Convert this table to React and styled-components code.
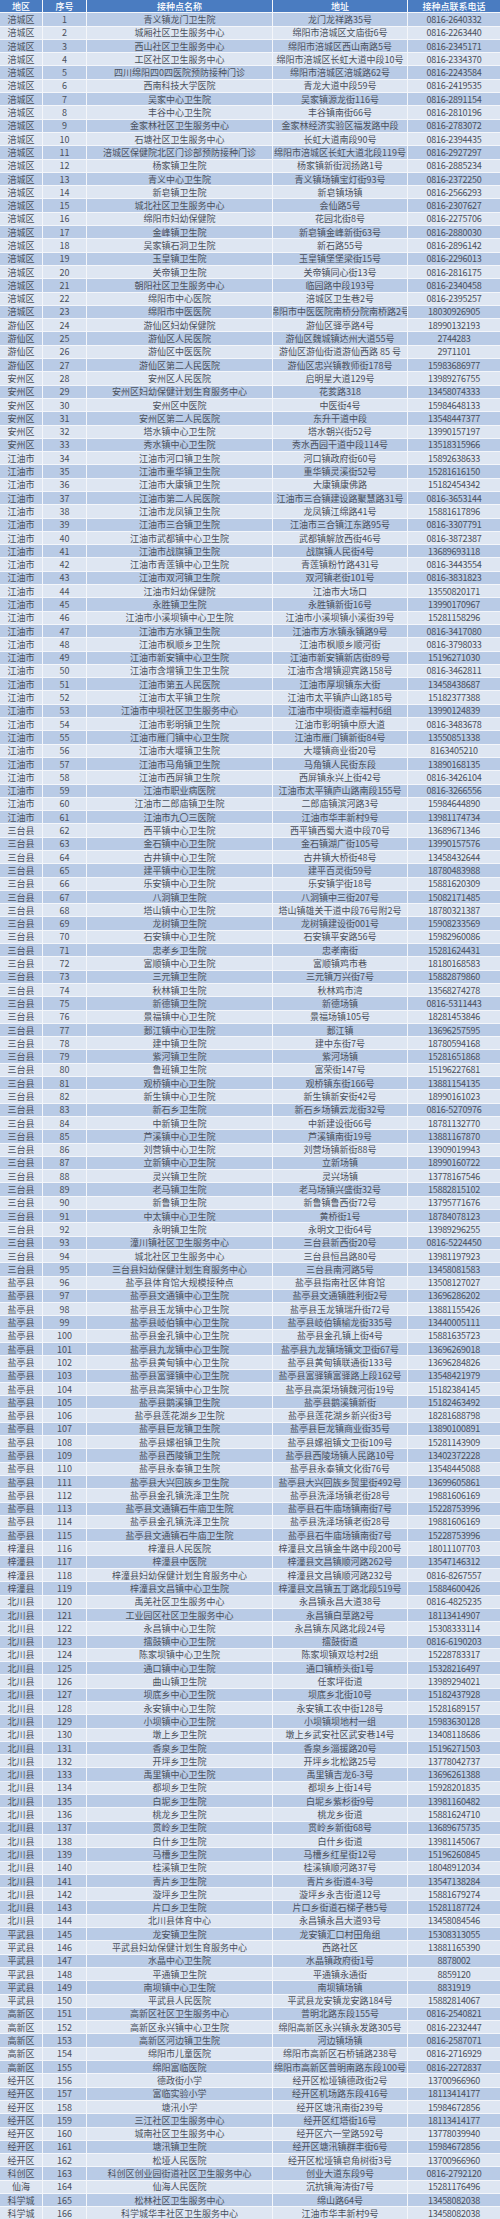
import React from 'react';
import styled, { createGlobalStyle } from 'styled-components';

const GlobalStyle = createGlobalStyle`
  html, body {
    margin: 0;
    padding: 0;
    background: #ffffff;
  }
  body {
    font-family: "Noto Sans CJK SC", "Noto Sans", sans-serif;
  }
`;

const HEAD = ['地区', '序号', '接种点名称', '地址', '接种点联系电话'];

// 地区|接种点名称|地址|电话
const rows = `涪城区|青义镇龙门卫生院|龙门龙祥路35号|0816-2640332
涪城区|城厢社区卫生服务中心|绵阳市涪城区文庙街6号|0816-2263440
涪城区|西山社区卫生服务中心|绵阳市涪城区西山南路5号|0816-2345171
涪城区|工区社区卫生服务中心|绵阳市涪城区长虹大道中段10号|0816-2334370
涪城区|四川绵阳四0四医院预防接种门诊|绵阳市涪城区涪城路62号|0816-2243584
涪城区|西南科技大学医院|青龙大道中段59号|0816-2419535
涪城区|吴家中心卫生院|吴家镇源龙街116号|0816-2891154
涪城区|丰谷中心卫生院|丰谷镇南街66号|0816-2810196
涪城区|金家林社区卫生服务中心|金家林经济实验区福发路中段|0816-2783072
涪城区|石塘社区卫生服务中心|长虹大道南段90号|0816-2394435
涪城区|涪城区保健院北区门诊部预防接种门诊|绵阳市涪城区长虹大道北段119号|0816-2927297
涪城区|杨家镇卫生院|杨家镇新街润扬路1号|0816-2885234
涪城区|青义中心卫生院|青义镇场镇宝灯街93号|0816-2372250
涪城区|新皂镇卫生院|新皂镇场镇|0816-2566293
涪城区|城北社区卫生服务中心|会仙路5号|0816-2307627
涪城区|绵阳市妇幼保健院|花园北街8号|0816-2275706
涪城区|金峰镇卫生院|新皂镇金峰新街63号|0816-2880030
涪城区|吴家镇石洞卫生院|新石路55号|0816-2896142
涪城区|玉皇镇卫生院|玉皇镇堡堡梁街15号|0816-2296013
涪城区|关帝镇卫生院|关帝镇同心街13号|0816-2816175
涪城区|朝阳社区卫生服务中心|临园路中段193号|0816-2340458
涪城区|绵阳市中心医院|涪城区卫生巷2号|0816-2395257
涪城区|绵阳市中医医院|绵阳市中医医院南桥分院南桥路2号|18030926905
游仙区|游仙区妇幼保健院|游仙区驿亭路4号|18990132193
游仙区|游仙区人民医院|游仙区魏城镇达州大道55号|2744283
游仙区|游仙区中医医院|游仙区游仙街道游仙西路 85 号|2971101
游仙区|游仙区第二人民医院|游仙区忠兴镇教师街178号|15983686977
安州区|安州区人民医院|启明星大道129号|13989276755
安州区|安州区妇幼保健计划生育服务中心|花荄路318|13458074333
安州区|安州区中医院|中医街4号|15984648133
安州区|安州区第二人民医院|东升干道中段|13548447377
安州区|塔水镇中心卫生院|塔水朝兴街52号|13990157197
安州区|秀水镇中心卫生院|秀水西园干道中段114号|13518315966
江油市|江油市河口镇卫生院|河口镇政府街60号|15892638633
江油市|江油市重华镇卫生院|重华镇灵溪街52号|15281616150
江油市|江油市大康镇卫生院|大康镇康佛路|15182454342
江油市|江油市第二人民医院|江油市三合镇建设路聚慧路31号|0816-3653144
江油市|江油市龙凤镇卫生院|龙凤镇江绵路41号|15881617896
江油市|江油市三合镇卫生院|江油市三合镇江东路95号|0816-3307791
江油市|江油市武都镇中心卫生院|武都镇解放西街46号|0816-3872387
江油市|江油市战旗镇卫生院|战旗镇人民街4号|13689693118
江油市|江油市青莲镇中心卫生院|青莲镇粉竹路431号|0816-3443554
江油市|江油市双河镇卫生院|双河镇老街101号|0816-3831823
江油市|江油市妇幼保健院|江油市大场口|13550820171
江油市|永胜镇卫生院|永胜镇新街16号|13990170967
江油市|江油市小溪坝镇中心卫生院|江油市小溪坝镇小溪街39号|15281158296
江油市|江油市方水镇卫生院|江油市方水镇永镇路9号|0816-3417080
江油市|江油市枫顺乡卫生院|江油市枫顺乡顺河街|0816-3798033
江油市|江油市新安镇中心卫生院|江油市新安镇新店街89号|15196271030
江油市|江油市含增镇卫生卫生院|江油市含增镇迎宾路158号|0816-3462811
江油市|江油市第五人民医院|江油市厚坝镇东大街|13458438687
江油市|江油市太平镇卫生院|江油市太平镇庐山路185号|15182377388
江油市|江油市中坝社区卫生服务中心|江油市中坝街道幸福村6组|13990124839
江油市|江油市彰明镇卫生院|江油市彰明镇中原大道|0816-3483678
江油市|江油市雁门镇中心卫生院|江油市雁门镇新街84号|13550851338
江油市|江油市大堰镇卫生院|大堰镇商业街20号|8163405210
江油市|江油市马角镇卫生院|马角镇人民街东段|13890168135
江油市|江油市西屏镇卫生院|西屏镇永兴上街42号|0816-3426104
江油市|江油市职业病医院|江油市太平镇庐山路南段155号|0816-3266556
江油市|江油市二郎庙镇卫生院|二郎庙镇滨河路3号|15984644890
江油市|江油市九〇三医院|江油市华丰新村9号|13981174734
三台县|西平镇中心卫生院|西平镇西蜀大道中段70号|13689671346
三台县|金石镇中心卫生院|金石镇湖广街105号|13990157576
三台县|古井镇中心卫生院|古井镇大桥街48号|13458432644
三台县|建平镇中心卫生院|建平百灵街59号|18780483988
三台县|乐安镇中心卫生院|乐安镇学街18号|15881620309
三台县|八洞镇卫生院|八洞镇中三街207号|15082171485
三台县|塔山镇中心卫生院|塔山镇雄关干道中段76号附2号|18780321387
三台县|龙树镇卫生院|龙树镇建设街001号|15908233569
三台县|石安镇中心卫生院|石安镇平安路56号|15982960086
三台县|忠孝乡卫生院|忠孝南街|15281624431
三台县|富顺镇中心卫生院|富顺镇鸡市巷|18180168583
三台县|三元镇卫生院|三元镇万兴街7号|15882879860
三台县|秋林镇卫生院|秋林鸡市湾|13568274278
三台县|新德镇卫生院|新德场镇|0816-5311443
三台县|景福镇中心卫生院|景福场镇105号|18281453846
三台县|郪江镇中心卫生院|郪江镇|13696257595
三台县|建中镇卫生院|建中东街7号|18780594168
三台县|紫河镇卫生院|紫河场镇|15281651868
三台县|鲁班镇卫生院|富荣街147号|15196227681
三台县|观桥镇中心卫生院|观桥镇东街166号|13881154135
三台县|新生镇中心卫生院|新生镇新安街42号|18990161023
三台县|新石乡卫生院|新石乡场镇云龙街32号|0816-5270976
三台县|中新镇卫生院|中新建设街66号|18781132770
三台县|芦溪镇中心卫生院|芦溪镇南街19号|13881167870
三台县|刘营镇中心卫生院|刘营场镇新街88号|13909019943
三台县|立新镇中心卫生院|立新场镇|18990160722
三台县|灵兴镇卫生院|灵兴场镇|13778167546
三台县|老马镇卫生院|老马场镇兴盛街32号|15882815102
三台县|新鲁镇卫生院|新鲁镇鲁西街72号|13795771676
三台县|中太镇中心卫生院|黄桥街1号|18784078123
三台县|永明镇卫生院|永明文卫街64号|13989296255
三台县|潼川镇社区卫生服务中心|三台县新西街20号|0816-5224450
三台县|城北社区卫生服务中心|三台县恒昌路80号|13981197923
三台县|三台县妇幼保健计划生育服务中心|三台县南河路5号|13458081583
盐亭县|盐亭县体育馆大规模接种点|盐亭县指南社区体育馆|13508127027
盐亭县|盐亭县文通镇中心卫生院|盐亭县文通镇胜利街2号|13696286202
盐亭县|盐亭县玉龙镇中心卫生院|盐亭县玉龙镇瑞升街72号|13881155426
盐亭县|盐亭县岐伯镇中心卫生院|盐亭县岐伯镇榆龙街335号|13440005111
盐亭县|盐亭县金孔镇中心卫生院|盐亭县金孔镇上街4号|15881635723
盐亭县|盐亭县九龙镇中心卫生院|盐亭县九龙镇场镇文卫街67号|13696269018
盐亭县|盐亭县黄甸镇中心卫生院|盐亭县黄甸镇联通街133号|13696284826
盐亭县|盐亭县富驿镇中心卫生院|盐亭县富驿镇富驿路上段162号|13548421979
盐亭县|盐亭县高渠镇中心卫生院|盐亭县高渠场镇魏河街19号|15182384145
盐亭县|盐亭县鹅溪镇卫生院|盐亭县鹅溪镇新街|15182463492
盐亭县|盐亭县莲花湖乡卫生院|盐亭县莲花湖乡新兴街3号|18281688798
盐亭县|盐亭县巨龙镇卫生院|盐亭县巨龙镇商业街35号|13890100891
盐亭县|盐亭县嫘祖镇卫生院|盐亭县嫘祖镇文卫街109号|15281143909
盐亭县|盐亭县西陵镇卫生院|盐亭县西陵场镇人民路10号|13402372228
盐亭县|盐亭县永泰镇卫生院|盐亭县永泰镇文化街76号|13548445088
盐亭县|盐亭县大兴回族乡卫生院|盐亭县大兴回族乡贸里街492号|13699605861
盐亭县|盐亭县金孔镇洗泽卫生院|盐亭县洗泽场镇老街28号|19881606169
盐亭县|盐亭县文通镇石牛庙卫生院|盐亭县石牛庙场镇南街7号|15228753996
盐亭县|盐亭县金孔镇洗泽卫生院|盐亭县洗泽场镇老街28号|19881606169
盐亭县|盐亭县文通镇石牛庙卫生院|盐亭县石牛庙场镇南街7号|15228753996
梓潼县|梓潼县人民医院|梓潼县文昌镇金牛路中段200号|18011107703
梓潼县|梓潼县中医院|梓潼县文昌镇顺河路262号|13547146312
梓潼县|梓潼县妇幼保健计划生育服务中心|梓潼县文昌镇顺河路232号|0816-8267557
梓潼县|梓潼县文昌镇中心卫生院|梓潼县文昌镇五丁路北段519号|15884600426
北川县|禹羌社区卫生服务中心|永昌镇永昌大道38号|0816-4825235
北川县|工业园区社区卫生服务中心|永昌镇白草路2号|18113414907
北川县|永昌镇中心卫生院|永昌镇东风路北段24号|15308333114
北川县|擂鼓镇中心卫生院|擂鼓街道|0816-6190203
北川县|陈家坝镇中心卫生院|陈家坝镇双埝村2组|15228783317
北川县|通口镇中心卫生院|通口镇桥头街1号|15328216497
北川县|曲山镇卫生院|任家坪街道|13989294021
北川县|坝底乡中心卫生院|坝底乡北街10号|15182437928
北川县|永安镇中心卫生院|永安镇工农中街128号|15281689157
北川县|小坝镇中心卫生院|小坝镇坝地村一组|15983630128
北川县|墩上乡卫生院|墩上乡武安社区武安巷14号|13408118686
北川县|香泉乡卫生院|香泉乡淄援路20号|15196271503
北川县|开坪乡卫生院|开坪乡北松路25号|13778042737
北川县|禹里镇中心卫生院|禹里镇吉龙6-3号|13696261388
北川县|都坝乡卫生院|都坝乡上街14号|15928201835
北川县|白坭乡卫生院|白坭乡紫杉街9号|13981160482
北川县|桃龙乡卫生院|桃龙乡街道|15881624710
北川县|贯岭乡卫生院|贯岭乡新街68号|13689675735
北川县|白什乡卫生院|白什乡街道|13981145067
北川县|马槽乡卫生院|马槽乡红星街12号|15196260845
北川县|桂溪镇卫生院|桂溪镇顺河路37号|18048912034
北川县|青片乡卫生院|青片乡街道4-3号|13547138284
北川县|漩坪乡卫生院|漩坪乡永吉街道12号|15881679274
北川县|片口乡卫生院|片口乡街道石梯子巷5号|15281187724
北川县|北川县体育中心|永昌镇永昌大道93号|13458084546
平武县|龙安镇卫生院|龙安镇汇口村田角组|15308313055
平武县|平武县妇幼保健计划生育服务中心|西路社区|13881165390
平武县|水晶中心卫生院|水晶镇政府街1号|8878002
平武县|平通镇卫生院|平通镇永通街|8859120
平武县|南坝镇中心卫生院|南坝镇场镇|8831919
平武县|平武县人民医院|平武县龙安镇龙安路184号|15882814067
高新区|高新区社区卫生服务中心|普明北路东段155号|0816-2540821
高新区|高新区永兴镇中心卫生院|绵阳高新区永兴镇永发路305号|0816-2232447
高新区|高新区河边镇卫生院|河边镇场镇|0816-2587071
高新区|绵阳市儿童医院|绵阳市高新区石桥铺路238号|0816-2716929
高新区|绵阳富临医院|绵阳市高新区普明南路东段100号|0816-2272837
经开区|德政街小学|经开区松垭镇德政街2号|13700966960
经开区|富临实验小学|经开区机场路东段416号|18113414177
经开区|塘汛小学|经开区塘汛南街239号|15984672856
经开区|三江社区卫生服务中心|经开区红塔街16号|18113414177
经开区|城南社区卫生服务中心|经开区六一堂路592号|13778039940
经开区|塘汛镇卫生院|经开区塘汛镇群丰街6号|15984672856
经开区|松垭人民医院|经开区松垭镇皂角树街3号|13700966960
科创区|科创区创业园街道社区卫生服务中心|创业大道东段9号|0816-2792120
仙海|仙海人民医院|沉抗镇海涛街7号|15281176496
科学城|松林社区卫生服务中心|绵山路64号|13458082038
科学城|科学城华丰社区卫生服务中心|江油市华丰新村9号|13458082038`
  .split('\n')
  .map((line) => line.split('|'));

const tones = {
  head: '#4a7cc1',
  dark: '#b9cbe6',
  light: '#dee6f2',
};

const Sheet = styled.div`
  display: flex;
  flex-direction: column;
  gap: 1px;
  height: 2219px;
  width: 500px;
  background: #f4f6fa;
`;

const Row = styled.div`
  flex: 1 1 0;
  min-height: 0;
  display: grid;
  grid-template-columns: 42px 43px 185px 134px 92px;
  column-gap: 1px;
`;

const Cell = styled.div`
  display: flex;
  align-items: center;
  justify-content: center;
  overflow-x: clip;
  overflow-y: visible;
  white-space: nowrap;
  background: ${({ $tone }) => tones[$tone]};
  color: ${({ $tone }) => ($tone === 'head' ? '#ffffff' : '#4a505c')};
  font-size: 9px;
  font-weight: ${({ $tone }) => ($tone === 'head' ? 500 : 400)};
  line-height: 1;
  letter-spacing: ${({ $narrow }) => ($narrow ? '-0.25px' : '0')};
`;

const HeaderRow = () => (
  <Row>
    {HEAD.map((h) => (
      <Cell key={h} $tone="head">
        {h}
      </Cell>
    ))}
  </Row>
);

const SiteRow = ({ index, district, name, address, phone }) => {
  const tone = index % 2 === 1 ? 'dark' : 'light';
  return (
    <Row>
      <Cell $tone={tone}>{district}</Cell>
      <Cell $tone={tone}>{index}</Cell>
      <Cell $tone={tone}>{name}</Cell>
      <Cell $tone={tone}>{address}</Cell>
      <Cell $tone={tone} $narrow>
        {phone}
      </Cell>
    </Row>
  );
};

const App = () => (
  <>
    <GlobalStyle />
    <Sheet>
      <HeaderRow />
      {rows.map(([district, name, address, phone], i) => (
        <SiteRow
          key={i}
          index={i + 1}
          district={district}
          name={name}
          address={address}
          phone={phone}
        />
      ))}
    </Sheet>
  </>
);

export default App;
